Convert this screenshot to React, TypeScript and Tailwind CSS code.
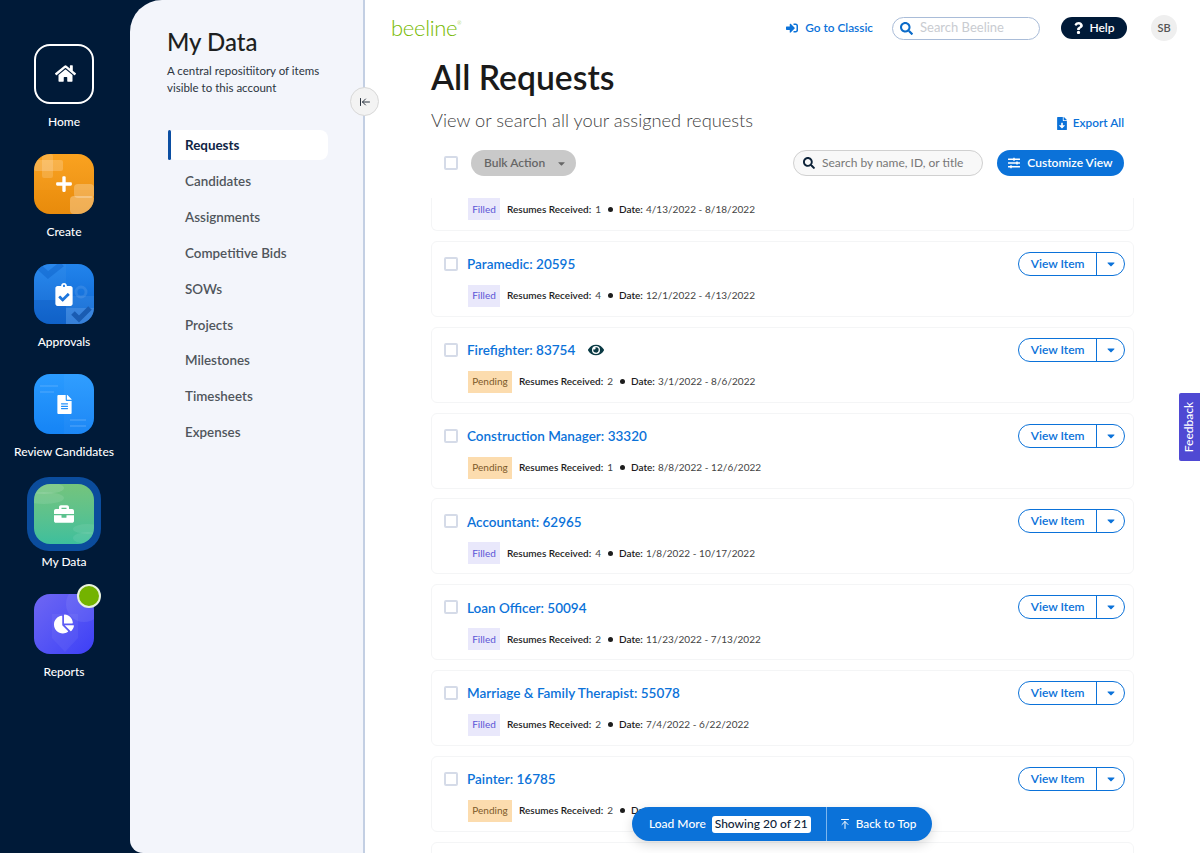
import React from "react";
import { FaHome, FaPlus, FaClipboardCheck, FaFileAlt, FaBriefcase, FaChartPie, FaSignInAlt, FaSearch, FaQuestion, FaFileDownload, FaSlidersH, FaEye, FaCaretDown } from "react-icons/fa";
import { ArrowLeftToLine, ArrowUpToLine } from "lucide-react";

const rows = [
  { t: "Paramedic: 20595", s: "Filled", r: 4, d: "12/1/2022 - 4/13/2022" },
  { t: "Firefighter: 83754", s: "Pending", r: 2, d: "3/1/2022 - 8/6/2022", eye: true },
  { t: "Construction Manager: 33320", s: "Pending", r: 1, d: "8/8/2022 - 12/6/2022" },
  { t: "Accountant: 62965", s: "Filled", r: 4, d: "1/8/2022 - 10/17/2022" },
  { t: "Loan Officer: 50094", s: "Filled", r: 2, d: "11/23/2022 - 7/13/2022" },
  { t: "Marriage & Family Therapist: 55078", s: "Filled", r: 2, d: "7/4/2022 - 6/22/2022" },
  { t: "Painter: 16785", s: "Pending", r: 2, d: "7/1/2022 - 9/2/2022" },
];
const nav = ["Candidates", "Assignments", "Competitive Bids", "SOWs", "Projects", "Milestones", "Timesheets", "Expenses"];

function Meta({ s, r, d }: { s: string; r: number; d: string }) {
  return (
    <div className="flex items-center h-[22px] ml-[1px] text-[10px] text-[#444]">
      {s === "Filled" ? (
        <span className="h-[22px] w-[32px] flex items-center justify-center bg-[#e9e8fb] text-[#5b55d6]">Filled</span>
      ) : (
        <span className="h-[22px] w-[44px] flex items-center justify-center bg-[#fcdcae] text-[#7c5a2a]">Pending</span>
      )}
      <span className="ml-[7px] font-semibold text-[#1d1d1d]">Resumes Received:</span>
      <span className="ml-[4px]">{r}</span>
      <span className="ml-[7px] mr-[6px] w-[5px] h-[5px] rounded-full bg-[#1d1d1d]" />
      <span className="font-semibold text-[#1d1d1d]">Date:</span>
      <span className="ml-[3px] tracking-[0.05px]">{d}</span>
    </div>
  );
}

function Check() {
  return <span className="block w-[14px] h-[14px] bg-white border-2 border-[#d5dbe8] rounded-[2px]" />;
}

function Card({ t, s, r, d, eye }: { t: string; s: string; r: number; d: string; eye?: boolean }) {
  return (
    <div className="h-[76px] mb-[9.8px] shrink-0 border border-[#f4f5f6] rounded-md pt-[9px] pr-[8px] flex justify-between bg-white">
      <div className="flex">
        <div className="w-[35px] pl-[12px] pt-[6px]"><Check /></div>
        <div>
          <div className="flex items-center h-[27px] text-[13.5px] font-semibold text-[#0b72d9]">
            {t}
            {eye && <FaEye className="ml-[13px] w-[16px] h-[16px] text-[#0a3a44]" />}
          </div>
          <div className="mt-[7px]"><Meta s={s} r={r} d={d} /></div>
        </div>
      </div>
      <div className="flex h-[24px] w-[107px] border border-[#0b72d9] rounded-full text-[#0b72d9] text-[12px] font-semibold mt-[1px] items-center">
        <span className="w-[78px] text-center">View Item</span>
        <span className="w-[28px] h-full border-l border-[#0b72d9] flex items-center justify-center"><FaCaretDown className="w-[12px] h-[12px]" /></span>
      </div>
    </div>
  );
}

function Tile({ bg, overlay, children }: { bg: string; overlay?: React.ReactNode; children: React.ReactNode }) {
  return (
    <div className={`relative w-[60px] h-[60px] rounded-[16px] overflow-hidden flex items-center justify-center text-white ${bg}`}>
      <svg viewBox="0 0 60 60" className="absolute inset-0 w-full h-full">{overlay}</svg>
      <span className="relative flex">{children}</span>
    </div>
  );
}

function RailItem({ label, children }: { label: string; children: React.ReactNode }) {
  return (
    <div className="h-[110px] flex flex-col items-center">
      <div className="h-[60px] flex items-center justify-center">{children}</div>
      <div className="mt-[9px] text-[12px] font-medium text-white whitespace-nowrap">{label}</div>
    </div>
  );
}

export default function App() {
  return (
    <div className="relative w-full h-[853px] overflow-hidden flex bg-[#001a38] font-['Lato',sans-serif]">
      <aside className="w-[130px] shrink-0 pt-[44px] pr-[2px]">
        <RailItem label="Home">
          <div className="w-[60px] h-[60px] rounded-[16px] border-2 border-white flex items-center justify-center text-white pb-[2px] pl-[2px]"><FaHome className="w-[21px] h-[21px]" /></div>
        </RailItem>
        <RailItem label="Create">
          <Tile
            bg="bg-gradient-to-b from-[#fa9f18] to-[#e88b0c]"
            overlay={
              <g fill="#fff">
                <rect x="0" y="0" width="60" height="36" fillOpacity="0.03" />
                <rect x="0" y="6" width="29" height="11" rx="2" fillOpacity="0.2" />
                <rect x="8" y="0" width="11" height="24" rx="2" fillOpacity="0.16" />
                <rect x="40" y="30" width="20" height="14" rx="4" fillOpacity="0.25" />
                <rect x="36" y="42" width="24" height="18" rx="4" fillOpacity="0.3" />
              </g>
            }
          >
            <FaPlus className="w-[18px] h-[18px]" />
          </Tile>
        </RailItem>
        <RailItem label="Approvals">
          <Tile
            bg="bg-gradient-to-b from-[#2284ec] to-[#0a64d0]"
            overlay={
              <g>
                <path d="M0 0h32v60H0z" fill="#fff" fillOpacity="0.04" />
                <path d="M0 36h32v24H0z" fill="#003f9e" fillOpacity="0.18" />
                <path d="M32 44h28v16H32z" fill="#fff" fillOpacity="0.18" />
                <path d="M32 32h28v12H32z" fill="#fff" fillOpacity="0.07" />
                <path d="M39 49l6 6 11-11" stroke="#1a5cb2" strokeWidth="5" fill="none" />
                <path d="M4 2l10 9 14-11" stroke="#0a5fc8" strokeOpacity="0.45" strokeWidth="6" fill="none" />
                <circle cx="47" cy="28" r="5" fill="none" stroke="#fff" strokeOpacity="0.1" strokeWidth="3" />
              </g>
            }
          >
            <FaClipboardCheck className="w-[18px] h-[23px]" />
          </Tile>
        </RailItem>
        <RailItem label="Review Candidates">
          <Tile
            bg="bg-gradient-to-b from-[#2a9bff] to-[#1584f5]"
            overlay={
              <g fill="#fff">
                <path d="M30 0h30v60H30z" fillOpacity="0.03" />
                <rect x="6" y="11" width="18" height="2" fillOpacity="0.1" />
                <rect x="6" y="17" width="14" height="2" fillOpacity="0.1" />
                <rect x="36" y="45" width="16" height="2" fillOpacity="0.12" />
                <rect x="36" y="51" width="16" height="2" fillOpacity="0.12" />
              </g>
            }
          >
            <FaFileAlt className="w-[15px] h-[19px]" />
          </Tile>
        </RailItem>
        <RailItem label="My Data">
          <div className="w-[74px] h-[74px] rounded-[22px] bg-[#0b4c9c] flex items-center justify-center">
            <Tile
              bg="bg-gradient-to-b from-[#74c47c] to-[#3dbf9c]"
              overlay={
                <g fill="#fff">
                  <ellipse cx="10" cy="4" rx="20" ry="6" fillOpacity="0.12" />
                  <ellipse cx="10" cy="14" rx="20" ry="6" fillOpacity="0.1" />
                  <ellipse cx="54" cy="45" rx="15" ry="5" fillOpacity="0.08" />
                  <ellipse cx="54" cy="54" rx="15" ry="6" fillOpacity="0.08" />
                </g>
              }
            >
              <FaBriefcase className="w-[20px] h-[20px]" />
            </Tile>
          </div>
        </RailItem>
        <RailItem label="Reports">
          <div className="relative">
            <Tile
              bg="bg-gradient-to-br from-[#6f66f3] to-[#3d3ef6]"
              overlay={
                <g fill="#fff">
                  <path d="M18 20h26v24l-13 14-13-14z" fillOpacity="0.05" />
                  <circle cx="50" cy="10" r="18" fillOpacity="0.08" />
                </g>
              }
            >
              <FaChartPie className="w-[20px] h-[20px]" />
            </Tile>
            <span className="absolute -top-[10px] -right-[7px] w-[24px] h-[24px] rounded-full bg-[#74b300] border-2 border-[#e8f2dc]" />
          </div>
        </RailItem>
      </aside>

      <section className="w-[235px] shrink-0 bg-[#f3f5fb] rounded-tl-[32px] rounded-bl-[13px] border-r-2 border-[#c3cfe3] pl-[37px] pt-[27px]">
        <h2 className="text-[24px] leading-[30px] font-medium text-[#1d1f21]">My Data</h2>
        <p className="mt-[5px] w-[160px] text-[11.5px] leading-[17px] text-[#2b3440]">A central repositiitory of items visible to this account</p>
        <nav className="mt-[34px] ml-[1px] w-[160px] text-[13.4px]">
          <div className="flex h-[30px] mb-[6px] bg-white rounded-[8px] font-bold text-[#0f2545]">
            <span className="w-[3px] rounded-full bg-[#0b4ea2]" />
            <span className="pl-[14px] flex items-center">Requests</span>
          </div>
          {nav.map((n) => (
            <div key={n} className="h-[30px] flex items-center font-semibold text-[#50555c] pl-[17px] mb-[5.9px]">{n}</div>
          ))}
        </nav>
      </section>

      <main className="relative flex-1 min-w-0 bg-white flex flex-col">
        <header className="h-[56px] shrink-0 flex items-center pl-[26px] pr-[23px]">
          <span className="text-[22px] font-light text-[#76b900] tracking-[-0.3px] leading-none">beeline<sup className="text-[5px] align-super">®</sup></span>
          <div className="ml-auto flex items-center">
            <span className="flex items-center text-[11.8px] font-semibold text-[#0b72d9]"><FaSignInAlt className="w-[12px] h-[12px] mr-[7px]" />Go to Classic</span>
            <div className="ml-[19px] w-[148px] h-[23px] rounded-full border border-[#a9bcd8] flex items-center pl-[7px] text-[13px] text-[#c9ccd1]"><FaSearch className="w-[13px] h-[13px] text-[#0b6bc9] mr-[7px]" />Search Beeline</div>
            <div className="ml-[21px] w-[66px] h-[22px] rounded-full bg-[#001a38] text-white text-[12px] font-semibold flex items-center justify-center"><FaQuestion className="w-[11px] h-[12px] mr-[5px]" />Help</div>
            <div className="ml-[24px] w-[26px] h-[26px] rounded-full bg-[#efefef] text-[#555] text-[11px] font-semibold flex items-center justify-center">SB</div>
          </div>
        </header>

        <div className="pl-[66px] pr-[66px] flex-1 min-h-0 flex flex-col">
          <h1 className="h-[42px] shrink-0 text-[33.7px] leading-[42px] font-semibold text-[#1a1a1a]">All Requests</h1>
          <div className="h-[44px] shrink-0 flex items-center justify-between pr-[10px]">
            <span className="text-[18.3px] font-light text-[#3f3f3f] mt-[2px]">View or search all your assigned requests</span>
            <span className="flex items-center text-[11.8px] font-semibold text-[#0b72d9] mt-[6px]"><FaFileDownload className="w-[10px] h-[13px] mr-[6px]" />Export All</span>
          </div>
          <div className="mt-[7px] h-[28px] shrink-0 flex items-center pl-[13px] pr-[10px]">
            <Check />
            <div className="ml-[13px] w-[105px] h-[26px] rounded-full bg-[#c9c9c9] text-[#666] text-[12px] font-semibold flex items-center pl-[13px]">Bulk Action<FaCaretDown className="ml-[11px] w-[11px] h-[11px]" /></div>
            <div className="ml-auto w-[190px] h-[26px] rounded-full bg-[#f8f8f8] border border-[#d0d0d0] flex items-center pl-[9px] text-[12px] text-[#777]"><FaSearch className="w-[12px] h-[12px] text-[#0d2238] mr-[7px]" />Search by name, ID, or title</div>
            <div className="ml-[14px] w-[127px] h-[26px] rounded-full bg-[#0b72d9] text-white text-[12px] font-semibold flex items-center justify-center"><FaSlidersH className="w-[12px] h-[12px] mr-[7px]" />Customize View</div>
          </div>
          <div className="mt-[21px] flex-1 min-h-0 overflow-hidden flex flex-col">
            <div className="h-[33.2px] mb-[9.8px] shrink-0 border border-t-0 border-[#f4f5f6] rounded-b-md pl-[35px]">
              <Meta s="Filled" r={1} d="4/13/2022 - 8/18/2022" />
            </div>
            {rows.map((r) => <Card key={r.t} {...r} />)}
            <div className="h-[76px] shrink-0 border border-[#f4f5f6] rounded-md" />
          </div>
        </div>

        <div className="absolute left-[267px] top-[807px] h-[34px] w-[300px] rounded-full bg-[#0b72d9] text-white text-[12px] font-medium flex items-center shadow-[0_4px_12px_rgba(0,0,0,0.15)]">
          <div className="w-[195px] h-full flex items-center pl-[17px] border-r border-[#7db6ee]">
            Load More
            <span className="ml-[6px] h-[17px] px-[3px] rounded-[3px] bg-white text-[#0d2238] flex items-center">Showing 20 of 21</span>
          </div>
          <div className="flex-1 flex items-center justify-center pr-[4px] text-[11.8px]"><ArrowUpToLine className="w-[12px] h-[12px] mr-[5px]" />Back to Top</div>
        </div>
      </main>

      <button className="absolute left-[350px] top-[87px] w-[29px] h-[29px] rounded-full bg-[#f3f3f3] border border-[#d8d8d8] flex items-center justify-center text-[#2b3440]"><ArrowLeftToLine className="w-[12px] h-[12px]" /></button>

      <div className="absolute right-0 top-[393px] w-[21px] h-[68px] bg-[#4f49d3] rounded-l-[2px] flex items-center justify-center">
        <span className="-rotate-90 text-[12px] font-medium text-white whitespace-nowrap">Feedback</span>
      </div>
    </div>
  );
}
